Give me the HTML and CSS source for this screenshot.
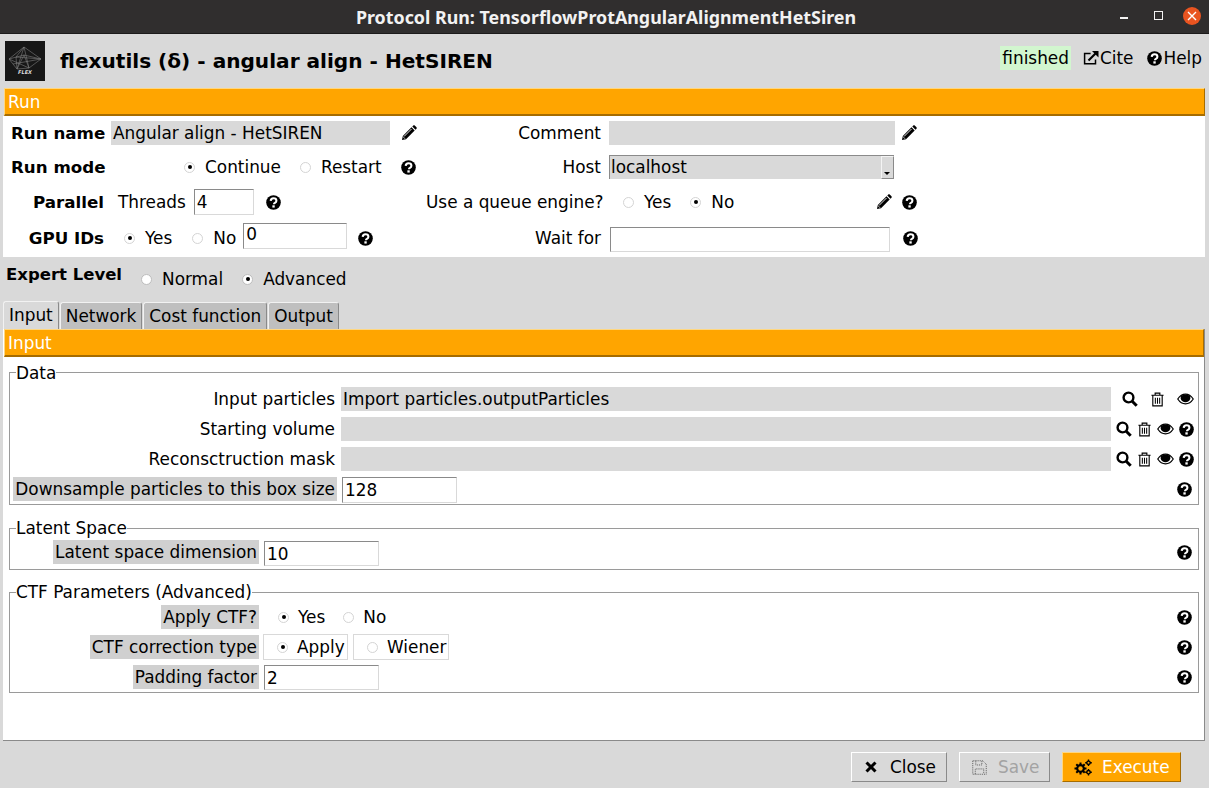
FILE: index.html
```html
<!DOCTYPE html>
<html lang="en">
<head>
  <meta charset="UTF-8">
  <title>Protocol Run: TensorflowProtAngularAlignmentHetSiren</title>
  <link rel="stylesheet" href="styles.css">
</head>
<body>

<svg class="defs" width="0" height="0">
  <defs>
    <symbol id="i-help" viewBox="0 0 16 16">
      <circle cx="8" cy="8" r="7.8" fill="#000"/>
      <path d="M5 6.300C5.100 4.500 6.400 3.500 8 3.500c1.800 0 3.100 1.100 3.100 2.600 0 1.400-.9 1.900-1.700 2.400-.7.400-.9.800-.9 1.400" fill="none" stroke="#fff" stroke-width="2.200"/>
      <rect x="6.800" y="11" width="2.500" height="2.400" fill="#fff"/>
    </symbol>
    <symbol id="i-pencil" viewBox="0 0 16 16">
      <path d="M1 15l.8-4L10.500 2.300l3.200 3.200L5 14.200z" fill="#000"/>
      <path d="M11.300 1.500l1-1c.4-.4 1-.4 1.400 0l1.800 1.800c.4.4.4 1 0 1.400l-1 1z" fill="#000"/>
      <path d="M3 11.500l7.500-7.500" stroke="#fff" stroke-width=".9"/>
      <path d="M2.100 11.800l2.100 2.100" stroke="#fff" stroke-width=".7"/>
    </symbol>
    <symbol id="i-search" viewBox="0 0 16 16">
      <circle cx="6.500" cy="6.500" r="4.900" fill="none" stroke="#000" stroke-width="2.400"/>
      <path d="M10.200 10.200l4.500 4.500" stroke="#000" stroke-width="3"/>
    </symbol>
    <symbol id="i-trash" viewBox="0 0 16 16">
      <path d="M5.500 3V1.200h5V3M1.500 3.500h13M3 3.500V14.800h10V3.500" fill="none" stroke="#000" stroke-width="1.200"/>
      <path d="M5.700 6v6.500M8 6v6.500M10.300 6v6.500" stroke="#000" stroke-width="1.100"/>
    </symbol>
    <symbol id="i-eye" viewBox="0 0 18 14">
      <path d="M.8 7C3 3.600 5.800 1.800 9 1.800S15 3.600 17.200 7C15 10.400 12.200 12.200 9 12.200S3 10.400 .8 7z" fill="#fff" stroke="#000" stroke-width="1.300"/>
      <path d="M4.500 3.500C6 2.600 7.500 2.200 9 2.200c1.700 0 3.100.4 4.500 1.300.6 1 .8 2 .6 3.200-.7 2.300-2.700 3.700-5.100 3.700S4.600 9 3.900 6.700C3.700 5.500 3.900 4.500 4.500 3.500z" fill="#000"/>
    </symbol>
    <symbol id="i-link" viewBox="0 0 16 16">
      <path d="M12.500 9.500v4.200H1.600V3.600h6" fill="none" stroke="#000" stroke-width="1.500"/>
      <path d="M5.500 10.500L12.500 3.500" stroke="#000" stroke-width="2.200"/>
      <path d="M9 .9h6.500v6.500z" fill="#000"/>
    </symbol>
    <symbol id="i-close" viewBox="0 0 12 12">
      <path d="M1.500 1.500l9 9M10.500 1.500l-9 9" stroke="#000" stroke-width="3"/>
    </symbol>
    <symbol id="i-save" viewBox="0 0 16 16">
      <path d="M.8.800H11.500L15.200 4.500V15.200H.8z" fill="none" stroke="#555" stroke-width="1" stroke-dasharray="1 1"/>
      <path d="M4 .8v4.500h6.500V.8M3.500 15V9.500h9V15" fill="none" stroke="#555" stroke-width="1" stroke-dasharray="1 1"/>
    </symbol>
    <symbol id="i-gears" viewBox="0 0 18 17">
      <path d="M6.500 3.500v12M.5 9.500h12M2.300 5.300l8.400 8.400M10.700 5.300l-8.400 8.400" stroke="#000" stroke-width="2"/>
      <circle cx="6.500" cy="9.500" r="4.400" fill="#000"/>
      <circle cx="6.500" cy="9.500" r="2.200" fill="#ffa500"/>
      <path d="M14.500 .5v6.600M11.200 3.800h6.600M14.500 9.900v6.600M11.200 13.200h6.600" stroke="#000" stroke-width="1.400"/>
      <circle cx="14.500" cy="3.800" r="2.400" fill="#000"/>
      <circle cx="14.500" cy="3.800" r="1" fill="#ffa500"/>
      <circle cx="14.500" cy="13.200" r="2.400" fill="#000"/>
      <circle cx="14.500" cy="13.200" r="1" fill="#ffa500"/>
    </symbol>
  </defs>
</svg>

<div class="titlebar">
  <span class="titlebar-text">Protocol Run: TensorflowProtAngularAlignmentHetSiren</span>
  <div class="win-buttons">
    <span class="win-min"></span>
    <span class="win-max"></span>
    <span class="win-close">
      <svg width="10" height="10" viewBox="0 0 10 10"><path d="M1 1l8 8M9 1l-8 8" stroke="#fff" stroke-width="1.400"/></svg>
    </span>
  </div>
</div>

<div class="header">
  <svg class="logo" width="40" height="40" viewBox="0 0 40 40">
    <rect width="40" height="40" fill="#171717"/>
    <g fill="none" stroke="#7d7d7d" stroke-width=".6">
      <path d="M19 6L4 18l8 10 12-1 12-9zM19 6l-7 22M19 6l5 21M19 6L11 16l25 2M4 18l15-4 17 4M12 28l7-14 5 13M11 16l1 12M4 18l20 9M8 23l28-5"/>
    </g>
    <text x="20" y="33" class="logo-text">FLEX</text>
  </svg>
  <h1 class="header-title">flexutils (δ) - angular align - HetSIREN</h1>
  <div class="header-links">
    <span class="status">finished</span>
    <span class="header-link"><svg class="ico" width="16" height="16"><use href="#i-link"/></svg>Cite</span>
    <span class="header-link"><svg class="ico" width="15" height="15"><use href="#i-help"/></svg>Help</span>
  </div>
</div>

<div class="section-bar run-bar">Run</div>

<div class="run-panel">
  <div class="run-row">
    <div class="run-label run-name">Run name</div>
    <div class="run-left">
      <div class="field field-name">Angular align - HetSIREN</div>
      <svg class="ico pencil-a" width="16" height="16"><use href="#i-pencil"/></svg>
    </div>
    <div class="right-label">Comment</div>
    <div class="run-right">
      <div class="field field-comment"></div>
      <svg class="ico pencil-b" width="16" height="16"><use href="#i-pencil"/></svg>
    </div>
  </div>

  <div class="run-row">
    <div class="run-label run-name">Run mode</div>
    <div class="run-left">
      <span class="radio on mode-continue"></span><span class="radio-text">Continue</span>
      <span class="radio mode-restart"></span><span class="radio-text">Restart</span>
      <svg class="ico help-mode" width="15" height="15"><use href="#i-help"/></svg>
    </div>
    <div class="right-label">Host</div>
    <div class="run-right">
      <div class="select">
        <span class="select-text">localhost</span>
        <span class="select-btn"><span class="select-arrow"></span></span>
      </div>
    </div>
  </div>

  <div class="run-row">
    <div class="run-label">Parallel</div>
    <div class="run-left">
      <span class="threads-text">Threads</span>
      <div class="input input-threads">4</div>
      <svg class="ico help-threads" width="15" height="15"><use href="#i-help"/></svg>
    </div>
    <div class="right-label">Use a queue engine?</div>
    <div class="run-right">
      <span class="radio queue-yes"></span><span class="radio-text">Yes</span>
      <span class="radio on queue-no"></span><span class="radio-text">No</span>
      <svg class="ico pencil-q" width="16" height="16"><use href="#i-pencil"/></svg>
      <svg class="ico help-q" width="15" height="15"><use href="#i-help"/></svg>
    </div>
  </div>

  <div class="run-row">
    <div class="run-label">GPU IDs</div>
    <div class="run-left">
      <span class="radio on gpu-yes"></span><span class="radio-text">Yes</span>
      <span class="radio gpu-no"></span><span class="radio-text">No</span>
      <div class="input input-gpu">0</div>
      <svg class="ico help-gpu" width="15" height="15"><use href="#i-help"/></svg>
    </div>
    <div class="right-label">Wait for</div>
    <div class="run-right">
      <div class="input input-wait"></div>
      <svg class="ico help-wait" width="15" height="15"><use href="#i-help"/></svg>
    </div>
  </div>
</div>

<div class="expert">
  <span class="expert-label">Expert Level</span>
  <span class="radio"></span><span class="radio-text">Normal</span>
  <span class="radio on"></span><span class="radio-text">Advanced</span>
</div>

<div class="tabs">
  <div class="tab active">Input</div>
  <div class="tab">Network</div>
  <div class="tab">Cost function</div>
  <div class="tab">Output</div>
</div>

<div class="tab-panel">
  <div class="section-bar input-bar">Input</div>

  <fieldset class="group group-data">
    <legend>Data</legend>
    <div class="param-row">
      <div class="param-label">Input particles</div>
      <div class="field field-wide">Import particles.outputParticles</div>
      <div class="row-icons first-icons">
        <svg class="ico" width="16" height="16"><use href="#i-search"/></svg>
        <svg class="ico" width="15" height="15"><use href="#i-trash"/></svg>
        <svg class="ico" width="17" height="14"><use href="#i-eye"/></svg>
      </div>
    </div>
    <div class="param-row">
      <div class="param-label">Starting volume</div>
      <div class="field field-wide"></div>
      <div class="row-icons">
        <svg class="ico" width="16" height="16"><use href="#i-search"/></svg>
        <svg class="ico" width="15" height="15"><use href="#i-trash"/></svg>
        <svg class="ico" width="17" height="14"><use href="#i-eye"/></svg>
        <svg class="ico" width="15" height="15"><use href="#i-help"/></svg>
      </div>
    </div>
    <div class="param-row">
      <div class="param-label">Reconsctruction mask</div>
      <div class="field field-wide"></div>
      <div class="row-icons">
        <svg class="ico" width="16" height="16"><use href="#i-search"/></svg>
        <svg class="ico" width="15" height="15"><use href="#i-trash"/></svg>
        <svg class="ico" width="17" height="14"><use href="#i-eye"/></svg>
        <svg class="ico" width="15" height="15"><use href="#i-help"/></svg>
      </div>
    </div>
    <div class="param-row">
      <div class="param-label"><span class="label-bg">Downsample particles to this box size</span></div>
      <div class="input input-box">128</div>
      <svg class="ico help-end" width="15" height="15"><use href="#i-help"/></svg>
    </div>
  </fieldset>

  <fieldset class="group group-latent">
    <legend>Latent Space</legend>
    <div class="param-row narrow">
      <div class="param-label"><span class="label-bg">Latent space dimension</span></div>
      <div class="input input-small">10</div>
      <svg class="ico help-end" width="15" height="15"><use href="#i-help"/></svg>
    </div>
  </fieldset>

  <fieldset class="group group-ctf">
    <legend>CTF Parameters (Advanced)</legend>
    <div class="param-row narrow">
      <div class="param-label"><span class="label-bg">Apply CTF?</span></div>
      <span class="radio on ctf-yes"></span><span class="radio-text">Yes</span>
      <span class="radio ctf-no"></span><span class="radio-text">No</span>
      <svg class="ico help-end" width="15" height="15"><use href="#i-help"/></svg>
    </div>
    <div class="param-row narrow">
      <div class="param-label"><span class="label-bg">CTF correction type</span></div>
      <div class="radio-box box-apply"><span class="radio on"></span><span class="radio-text">Apply</span></div>
      <div class="radio-box box-wiener"><span class="radio"></span><span class="radio-text">Wiener</span></div>
      <svg class="ico help-end" width="15" height="15"><use href="#i-help"/></svg>
    </div>
    <div class="param-row narrow">
      <div class="param-label"><span class="label-bg">Padding factor</span></div>
      <div class="input input-small">2</div>
      <svg class="ico help-end" width="15" height="15"><use href="#i-help"/></svg>
    </div>
  </fieldset>
</div>

<div class="footer">
  <div class="btn btn-close"><svg class="ico" width="12" height="12"><use href="#i-close"/></svg>Close</div>
  <div class="btn btn-save"><svg class="ico" width="15" height="15"><use href="#i-save"/></svg>Save</div>
  <div class="btn btn-exec"><svg class="ico" width="18" height="17"><use href="#i-gears"/></svg>Execute</div>
</div>

</body>
</html>
```

FILE: styles.css
```css
* {
  box-sizing: border-box;
}

html, body {
  margin: 0;
  padding: 0;
}

body {
  width: 1209px;
  height: 788px;
  overflow: hidden;
  background-color: #d9d9d9;
  color: #000;
  font-family: "DejaVu Sans", sans-serif;
  font-size: 16.9px;
  line-height: 20px;
}

.defs {
  position: absolute;
}

.ico {
  display: block;
  flex: none;
}

/* window title */
.titlebar {
  position: relative;
  height: 34px;
  background-color: #302e2e;
  border-bottom: 1px solid #1c1b1b;
  display: flex;
  align-items: center;
  justify-content: center;
}

.titlebar-text {
  color: #f2f2f2;
  font-family: "Noto Sans", sans-serif;
  font-weight: 700;
  font-size: 17.85px;
  padding-left: 3px;
}

.win-buttons {
  position: absolute;
  right: 0;
  top: 0;
  height: 33px;
  display: flex;
  align-items: center;
}

.win-min {
  width: 8px;
  height: 2px;
  margin-top: 2px;
  background-color: #f2f2f2;
}

.win-max {
  width: 9px;
  height: 9px;
  margin-left: 26px;
  margin-top: -2px;
  border: 1px solid #f2f2f2;
}

.win-close {
  width: 18px;
  height: 18px;
  margin-left: 20px;
  margin-right: 8px;
  margin-top: -2px;
  border-radius: 50%;
  background-color: #e95420;
  display: flex;
  align-items: center;
  justify-content: center;
}

/* header */
.header {
  height: 54px;
  display: flex;
  align-items: center;
  padding: 0 7px 0 5px;
}

.logo {
  flex: none;
}

.logo-text {
  fill: #ddd;
  font-family: "DejaVu Sans", sans-serif;
  font-weight: 700;
  font-style: italic;
  font-size: 5px;
  text-anchor: middle;
}

.header-title {
  margin: 0 0 0 15px;
  font-size: 20.1px;
  font-weight: 700;
  line-height: 24px;
  flex: 1;
}

.header-links {
  display: flex;
  align-items: center;
  margin-top: -6px;
}

.status {
  background-color: #d2f6cf;
  height: 24px;
  line-height: 24px;
  padding: 0 2px;
}

.header-link {
  display: flex;
  align-items: center;
  gap: 1px;
  margin-left: 12px;
}

.header-link + .header-link {
  margin-left: 14px;
}

/* orange bars */
.section-bar {
  background-color: #ffa500;
  color: #fff;
  height: 28px;
  line-height: 26px;
  padding-left: 3px;
  border: 1px solid #ffd780;
  border-right-color: #a66c00;
  border-bottom: 2px solid #a66c00;
}

.run-bar {
  margin: 0 4px 0 4px;
}

/* run panel */
.run-panel {
  margin: 0 4px 0 3px;
  height: 141px;
  background-color: #fff;
  padding-top: 5px;
}

.run-row {
  display: grid;
  grid-template-columns: 101px 322px 175px 1fr;
  align-items: center;
  height: 24px;
  margin-bottom: 10px;
}

.run-row:nth-child(2) {
  margin-bottom: 11px;
}

.run-row:nth-child(3) {
  margin-bottom: 12px;
}

.run-label {
  font-size: 16.7px;
  font-weight: 700;
  text-align: right;
  white-space: nowrap;
}

.run-name {
  text-align: left;
  padding-left: 8px;
}

.run-left, .run-right {
  display: flex;
  align-items: center;
  height: 24px;
}

.right-label {
  text-align: right;
  white-space: nowrap;
}

.field {
  background-color: #d9d9d9;
  height: 24px;
  line-height: 24px;
  padding-left: 2px;
  white-space: nowrap;
  flex: none;
}

.field-name {
  width: 279px;
  margin-left: 7px;
}

.pencil-a {
  margin-left: 11px;
}

.field-comment {
  width: 286px;
  margin-left: 8px;
}

.pencil-b {
  margin-left: 6px;
}

/* radios */
.radio {
  display: inline-block;
  flex: none;
  width: 11px;
  height: 11px;
  border-radius: 50%;
  background-color: #fff;
  border: 1px solid #d4d4d4;
  position: relative;
}

.radio.on::after {
  content: "";
  position: absolute;
  left: 2.500px;
  top: 2.500px;
  width: 4px;
  height: 4px;
  border-radius: 50%;
  background-color: #000;
}

.radio-text {
  margin-left: 10px;
  white-space: nowrap;
}

.mode-continue {
  margin-left: 80px;
}

.mode-restart {
  margin-left: 19px;
}

.help-mode {
  margin-left: 19px;
}

.select {
  display: flex;
  width: 285px;
  height: 24px;
  margin-left: 8px;
  background-color: #d9d9d9;
  border-top: 1px solid #8a8a8a;
  border-left: 1px solid #8a8a8a;
}

.select-text {
  flex: 1;
  line-height: 22px;
  padding-left: 1px;
}

.select-btn {
  width: 13px;
  border: 1px solid #8a8a8a;
  border-top-color: #f4f4f4;
  border-left-color: #f4f4f4;
  position: relative;
}

.select-arrow {
  position: absolute;
  left: 2px;
  bottom: 3px;
  border-left: 3px solid transparent;
  border-right: 3px solid transparent;
  border-top: 3px solid #000;
}

.threads-text {
  margin-left: 14px;
}

.input {
  flex: none;
  background-color: #fff;
  height: 25px;
  line-height: 24px;
  padding-left: 2px;
  border: 1px solid #d9d9d9;
  border-top: 1px solid #8a8a8a;
  border-left: 1px solid #8a8a8a;
}

.input-threads {
  width: 60px;
  height: 26px;
  margin-left: 8px;
}

.help-threads {
  margin-left: 12px;
}

.queue-yes {
  margin-left: 22px;
}

.queue-no {
  margin-left: 19px;
}

.pencil-q {
  margin-left: 142px;
}

.help-q {
  margin-left: 10px;
}

.gpu-yes {
  margin-left: 20px;
}

.gpu-no {
  margin-left: 20px;
}

.input-gpu {
  width: 104px;
  height: 26px;
  margin-left: 7px;
  margin-top: -4px;
  line-height: 20px;
}

.help-gpu {
  margin-left: 11px;
}

.input-wait {
  width: 280px;
  margin-left: 9px;
  margin-top: 2px;
}

.help-wait {
  margin-left: 13px;
}

/* expert level */
.expert {
  height: 44px;
  display: flex;
  align-items: center;
  padding: 0 0 0 6px;
}

.expert-label {
  font-size: 16.5px;
  font-weight: 700;
  margin-top: -9px;
}

.expert .radio {
  margin-left: 19px;
  border-color: #bdbdbd;
}

/* tabs */
.tabs {
  display: flex;
  height: 28px;
  padding-left: 3px;
  align-items: flex-end;
}

.tab {
  height: 27px;
  line-height: 26px;
  padding: 0 5px;
  margin-right: 1px;
  background-color: #bfbfbf;
  border: 1px solid #f2f2f2;
  border-right: 1px solid #8a8a8a;
  border-bottom: none;
  border-radius: 3px 3px 0 0;
}

.tab.active {
  height: 28px;
  background-color: #d9d9d9;
}

/* tab content */
.tab-panel {
  margin: 0 4px 0 3px;
  height: 412px;
  background-color: #fff;
  border-right: 1px solid #8a8a8a;
  border-bottom: 1px solid #8a8a8a;
}

.input-bar {
  margin-left: 1px;
}

.group {
  margin: 0 5px 0 6px;
  padding: 0;
  border: 1px solid #9a9a9a;
  min-width: 0;
}

.group legend {
  padding: 0;
  margin-left: 6px;
  line-height: 18px;
}

.group-data {
  margin-top: 6px;
  height: 142px;
  padding-top: 2px;
}

.group-data legend {
  padding-top: 1px;
}

.group-latent {
  margin-top: 14px;
  height: 51px;
}

.group-latent .input {
  margin-top: 2px;
}

.group-ctf {
  margin-top: 13px;
  height: 110px;
  padding-top: 1px;
}

.param-row {
  display: flex;
  align-items: center;
  height: 30px;
}

.param-label {
  width: 327px;
  flex: none;
  padding-right: 2px;
  text-align: right;
  white-space: nowrap;
}

.param-row.narrow .param-label {
  width: 249px;
}

.label-bg {
  display: inline-block;
  background-color: #d0d0d0;
  height: 24px;
  line-height: 24px;
  margin-right: -2px;
  padding: 0 2px;
}

.field-wide {
  width: 770px;
  margin-left: 4px;
}

.row-icons {
  display: flex;
  align-items: center;
  gap: 5px;
  margin-left: 5px;
}

.first-icons {
  gap: 12px;
  margin-left: 11px;
}

.help-end {
  margin-left: auto;
  margin-right: 6px;
}

.input-box {
  width: 115px;
  height: 26px;
  margin-left: 5px;
  margin-top: 2px;
}

.input-small {
  width: 115px;
  margin-left: 5px;
}

.ctf-yes {
  margin-left: 19px;
}

.ctf-no {
  margin-left: 18px;
}

.narrow .radio-text {
  margin-left: 9px;
}

.radio-box {
  display: flex;
  align-items: center;
  height: 26px;
  border: 1px solid #d9d9d9;
  padding-left: 13px;
}

.box-apply {
  width: 85px;
  margin-left: 4px;
}

.box-wiener {
  width: 96px;
  margin-left: 5px;
}

/* buttons */
.footer {
  display: flex;
  justify-content: flex-end;
  padding: 11px 28px 0 0;
  gap: 12px;
}

.btn {
  display: flex;
  align-items: center;
  height: 30px;
  padding-left: 13px;
  border: 1px solid #8a8a8a;
  border-top-color: #fff;
  border-left-color: #fff;
  white-space: nowrap;
}

.btn-close {
  width: 96px;
  gap: 13px;
}

.btn-save {
  width: 91px;
  gap: 11px;
  color: #a3a3a3;
  padding-left: 12px;
}

.btn-exec {
  width: 119px;
  gap: 10px;
  padding-left: 11px;
  background-color: #ffa500;
  color: #fff;
  border-color: #a66c00;
  border-top-color: #ffd780;
  border-left-color: #ffd780;
}
```
